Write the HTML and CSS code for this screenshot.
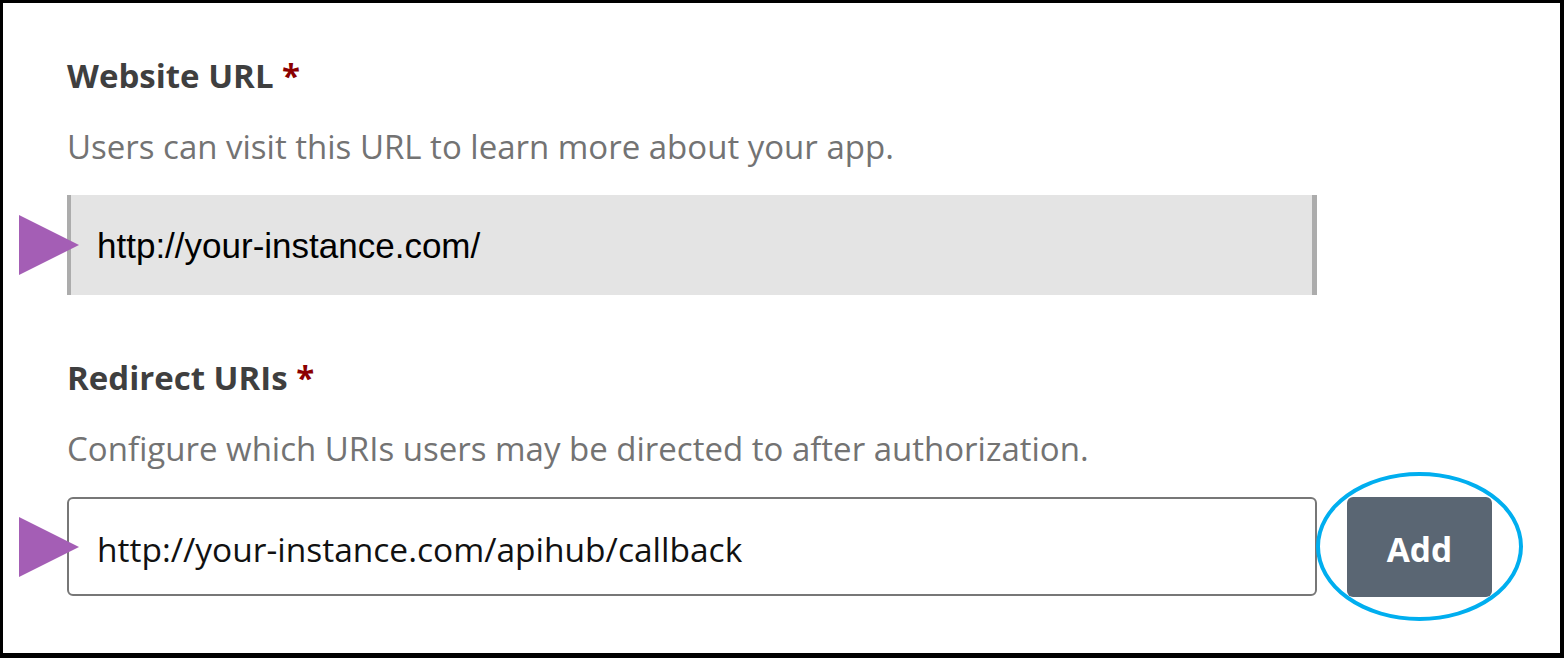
FILE: index.html
```html
<!DOCTYPE html>
<html lang="en">
<head>
<meta charset="UTF-8">
<meta name="viewport" content="width=device-width, initial-scale=1.0">
<title>App details</title>
<link rel="stylesheet" href="styles.css">
</head>
<body>
<div class="frame">

  <div class="field">
    <div class="label">Website URL <span class="req">*</span></div>
    <div class="hint">Users can visit this URL to learn more about your app.</div>
    <div class="input-wrap">
      <svg class="pointer" width="60" height="60" viewBox="0 0 60 60"><polygon points="0,0 60,30 0,60" fill="#a45eb5"/></svg>
      <div class="input readonly">http://your-instance.com/</div>
    </div>
  </div>

  <div class="field">
    <div class="label">Redirect URIs <span class="req">*</span></div>
    <div class="hint">Configure which URIs users may be directed to after authorization.</div>
    <div class="input-row">
      <div class="input-wrap">
        <svg class="pointer" width="60" height="60" viewBox="0 0 60 60"><polygon points="0,0 60,30 0,60" fill="#a45eb5"/></svg>
        <div class="input">http://your-instance.com/apihub/callback</div>
      </div>
      <div class="btn-wrap">
        <button class="add-btn">Add</button>
        <span class="highlight"></span>
      </div>
    </div>
  </div>

</div>
</body>
</html>
```

FILE: styles.css
```css
body {
  margin: 0;
  background-color: #fff;
  font-family: "Open Sans", "Noto Sans", sans-serif;
}
.frame {
  box-sizing: border-box;
  width: 1564px;
  height: 658px;
  border-style: solid;
  border-color: #000;
  border-width: 3px 4px 5px 3px;
  padding: 53px 0 0 64px;
}
.field {
  margin-bottom: 63px;
}
.label {
  font-size: 33px;
  font-weight: bold;
  color: #3f3f3f;
  line-height: 40px;
}
.req {
  color: #8b0000;
}
.hint {
  margin-top: 31px;
  font-size: 33px;
  color: #737373;
  line-height: 40px;
}
.input-wrap {
  position: relative;
  margin-top: 28px;
  width: 1250px;
}
.input-row .input-wrap {
  margin-top: 0;
}
.pointer {
  position: absolute;
  left: -48px;
  top: 50%;
  transform: translateY(-50%);
}
.input {
  box-sizing: border-box;
  height: 99px;
  display: flex;
  align-items: center;
  padding: 4px 0 0 28px;
  border: 2px solid #777;
  border-radius: 6px;
  font-size: 33.5px;
  color: #111;
  background-color: #fff;
}
.input.readonly {
  height: 100px;
  background-color: #e4e4e4;
  border: none;
  border-left: 4px solid #acacac;
  border-right: 5px solid #acacac;
  border-radius: 0;
  padding: 1px 0 0 26px;
  font-family: "Liberation Sans", Arial, sans-serif;
  font-size: 35px;
  color: #000;
}
.input-row {
  display: flex;
  gap: 30px;
  margin-top: 28px;
}
.btn-wrap {
  position: relative;
}
.add-btn {
  width: 145px;
  height: 100px;
  padding-top: 5px;
  border: none;
  border-radius: 6px;
  background-color: #5a6673;
  color: #fff;
  font-family: "Open Sans", "Noto Sans", sans-serif;
  font-size: 33.5px;
  font-weight: bold;
}
.highlight {
  position: absolute;
  left: -31px;
  top: -25px;
  width: 207px;
  height: 149px;
  box-sizing: border-box;
  border: 4px solid #00aeef;
  border-radius: 50%;
}
```
